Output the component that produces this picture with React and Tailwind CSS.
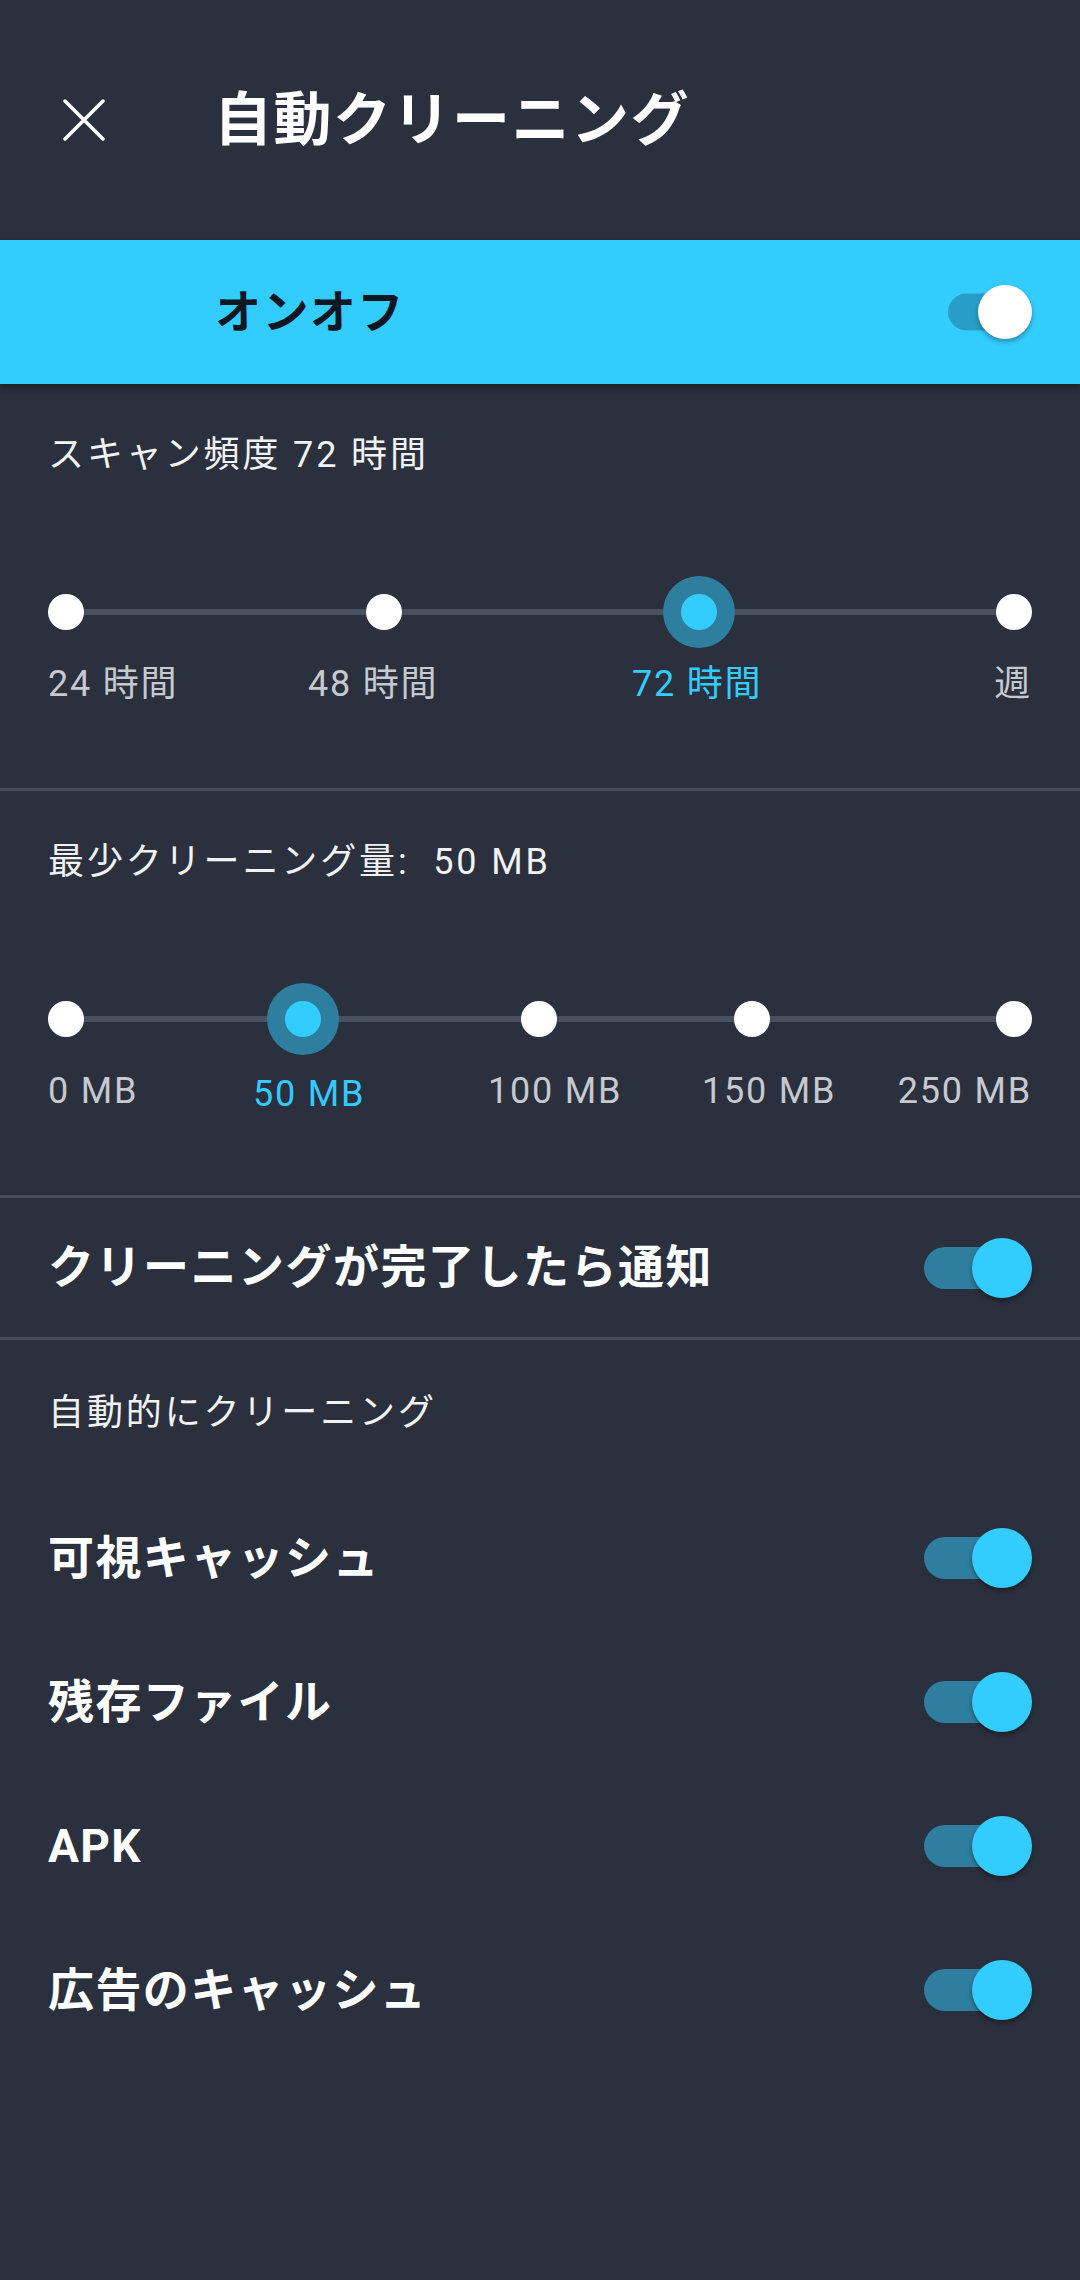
const FONT = "font-['Roboto','Noto_Sans_CJK_JP',sans-serif]";

function CloseIcon() {
    return (
        <svg width="42" height="42" viewBox="0 0 42 42" className="shrink-0">
            <path
                d="M2 2 L40 40 M40 2 L2 40"
                stroke="white"
                strokeWidth="3.5"
                strokeLinecap="round"
                fill="none"
            />
        </svg>
    );
}

function Toggle({ small }) {
    if (small) {
        return (
            <div className="relative w-[84px] h-[54px] shrink-0">
                <div className="absolute left-0 top-1/2 -translate-y-1/2 w-[72px] h-[37px] rounded-full bg-[#2a9dc6]" />
                <div className="absolute right-0 top-0 w-[54px] h-[54px] rounded-full bg-white shadow-[0_3px_5px_rgba(0,0,0,0.3)]" />
            </div>
        );
    }
    return (
        <div className="relative w-[108px] h-[60px] shrink-0">
            <div className="absolute left-0 top-1/2 -translate-y-1/2 w-[96px] h-[42px] rounded-full bg-[#2e7f9f]" />
            <div className="absolute right-0 top-0 w-[60px] h-[60px] rounded-full bg-[#33ccff] shadow-[0_3px_5px_rgba(0,0,0,0.35)]" />
        </div>
    );
}

function Dot({ pos, active }) {
    if (active) {
        return (
            <div className={`absolute top-0 ${pos} w-[72px] h-[72px] rounded-full bg-[#2e7f9f] flex items-center justify-center`}>
                <div className="w-[36px] h-[36px] rounded-full bg-[#33ccff]" />
            </div>
        );
    }
    return <div className={`absolute top-[18px] ${pos} w-[36px] h-[36px] rounded-full bg-white`} />;
}

function Slider({ title, dots, labels }) {
    return (
        <section className="h-[404px] px-[48px] pt-[47px] shrink-0">
            <p className="h-[48px] leading-[48px] text-[36px] tracking-[0.08em] text-[#f2f2f2] whitespace-pre">
                {title}
            </p>
            <div className="relative mt-[97px] h-[72px]">
                <div className="absolute left-[18px] right-[18px] top-[33px] h-[6px] bg-[#4a505d]" />
                {dots.map((d, i) => (
                    <Dot key={i} pos={d.pos} active={d.active} />
                ))}
            </div>
            <div className="relative mt-[14px] h-[44px]">
                {labels.map((l, i) => (
                    <span
                        key={i}
                        className={`absolute ${l.pos} leading-[44px] text-[36px] tracking-[0.05em] whitespace-nowrap ${
                            l.active ? "text-[#33ccff]" : "text-[#c6c9cf]"
                        }`}
                    >
                        {l.text}
                    </span>
                ))}
            </div>
        </section>
    );
}

function Divider() {
    return <div className="h-[3px] bg-[#474d5a] shrink-0" />;
}

function ToggleRow({ label }) {
    return (
        <div className="h-[144px] flex items-center justify-between pl-[48px] pr-[48px] shrink-0">
            <span className="text-[46px] font-bold tracking-[1.4px] text-white">{label}</span>
            <Toggle />
        </div>
    );
}

export default function App() {
    return (
        <div className={`${FONT} w-full min-h-[2280px] bg-[#2a303e] flex flex-col`}>
            <header className="h-[240px] flex items-center pl-[63px] shrink-0">
                <CloseIcon />
                <h1 className="ml-[109px] text-[58px] font-bold text-white leading-none tracking-[1.5px]">
                    自動クリーニング
                </h1>
            </header>

            <div className="h-[144px] bg-[#33ccff] flex items-center justify-between pl-[215px] pr-[48px] shadow-[0_4px_6px_rgba(0,0,0,0.35)] relative z-10 shrink-0">
                <span className="text-[46px] font-bold text-[#0f1722] tracking-[1.4px]">オンオフ</span>
                <Toggle small />
            </div>

            <Slider
                title="スキャン頻度 72 時間"
                dots={[
                    { pos: "left-[0px]" },
                    { pos: "left-[318px]" },
                    { pos: "left-[615px]", active: true },
                    { pos: "left-[948px]" },
                ]}
                labels={[
                    { pos: "left-[0px]", text: "24 時間" },
                    { pos: "left-[260px]", text: "48 時間" },
                    { pos: "left-[584px]", text: "72 時間", active: true },
                    { pos: "right-[0px]", text: "週" },
                ]}
            />
            <Divider />
            <Slider
                title={"最少クリーニング量:  50 MB"}
                dots={[
                    { pos: "left-[0px]" },
                    { pos: "left-[219px]", active: true },
                    { pos: "left-[473px]" },
                    { pos: "left-[686px]" },
                    { pos: "left-[948px]" },
                ]}
                labels={[
                    { pos: "left-[0px] top-0", text: "0 MB" },
                    { pos: "left-[205px] top-[3px]", text: "50 MB", active: true },
                    { pos: "left-[440px] top-0", text: "100 MB" },
                    { pos: "left-[654px] top-0", text: "150 MB" },
                    { pos: "right-[0px] top-0", text: "250 MB" },
                ]}
            />
            <Divider />
            <div className="h-[139px] flex items-center justify-between pl-[48px] pr-[48px] shrink-0">
                <span className="text-[46px] font-bold tracking-[1.5px] text-white">
                    クリーニングが完了したら通知
                </span>
                <Toggle />
            </div>
            <Divider />

            <div className="h-[146px] flex items-center pl-[48px] shrink-0">
                <span className="text-[36px] tracking-[0.08em] text-[#f2f2f2]">自動的にクリーニング</span>
            </div>
            <ToggleRow label="可視キャッシュ" />
            <ToggleRow label="残存ファイル" />
            <ToggleRow label="APK" />
            <ToggleRow label="広告のキャッシュ" />
        </div>
    );
}
